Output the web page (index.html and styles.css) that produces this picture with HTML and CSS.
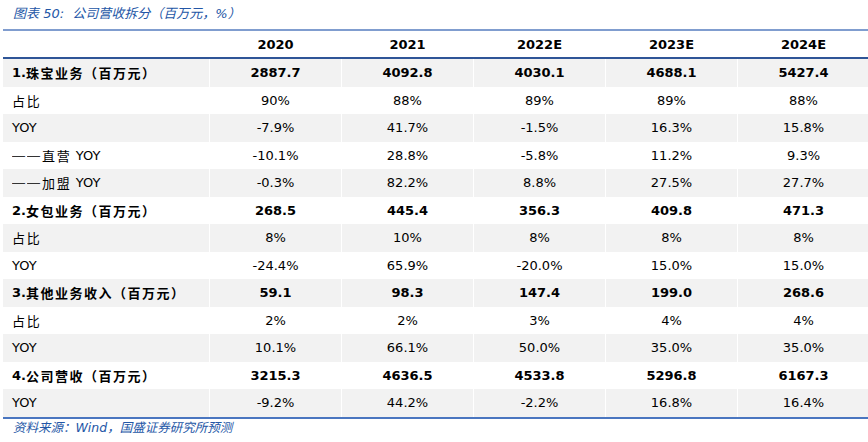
FILE: index.html
```html
<!DOCTYPE html>
<html lang="zh">
<head>
<meta charset="utf-8">
<link rel="stylesheet" href="styles.css">
</head>
<body>
<div class="caption">图表 50:&nbsp; 公司营收拆分（百万元，%）</div>
<div class="tbl">
  <div class="row head">
    <div class="c lab"></div><div class="c">2020</div><div class="c">2021</div><div class="c">2022E</div><div class="c">2023E</div><div class="c">2024E</div>
  </div>
  <div class="row g b"><div class="c lab">1.<span class="cjk">珠宝业务（百万元）</span></div><div class="c">2887.7</div><div class="c">4092.8</div><div class="c">4030.1</div><div class="c">4688.1</div><div class="c">5427.4</div></div>
  <div class="row"><div class="c lab"><span class="cjk">占比</span></div><div class="c">90%</div><div class="c">88%</div><div class="c">89%</div><div class="c">89%</div><div class="c">88%</div></div>
  <div class="row g"><div class="c lab">YOY</div><div class="c">-7.9%</div><div class="c">41.7%</div><div class="c">-1.5%</div><div class="c">16.3%</div><div class="c">15.8%</div></div>
  <div class="row"><div class="c lab"><span class="dash">—</span><span class="dash">—</span><span class="cjk">直营</span>&nbsp;YOY</div><div class="c">-10.1%</div><div class="c">28.8%</div><div class="c">-5.8%</div><div class="c">11.2%</div><div class="c">9.3%</div></div>
  <div class="row g"><div class="c lab"><span class="dash">—</span><span class="dash">—</span><span class="cjk">加盟</span>&nbsp;YOY</div><div class="c">-0.3%</div><div class="c">82.2%</div><div class="c">8.8%</div><div class="c">27.5%</div><div class="c">27.7%</div></div>
  <div class="row b"><div class="c lab">2.<span class="cjk">女包业务（百万元）</span></div><div class="c">268.5</div><div class="c">445.4</div><div class="c">356.3</div><div class="c">409.8</div><div class="c">471.3</div></div>
  <div class="row g"><div class="c lab"><span class="cjk">占比</span></div><div class="c">8%</div><div class="c">10%</div><div class="c">8%</div><div class="c">8%</div><div class="c">8%</div></div>
  <div class="row"><div class="c lab">YOY</div><div class="c">-24.4%</div><div class="c">65.9%</div><div class="c">-20.0%</div><div class="c">15.0%</div><div class="c">15.0%</div></div>
  <div class="row g b"><div class="c lab">3.<span class="cjk">其他业务收入（百万元）</span></div><div class="c">59.1</div><div class="c">98.3</div><div class="c">147.4</div><div class="c">199.0</div><div class="c">268.6</div></div>
  <div class="row"><div class="c lab"><span class="cjk">占比</span></div><div class="c">2%</div><div class="c">2%</div><div class="c">3%</div><div class="c">4%</div><div class="c">4%</div></div>
  <div class="row g"><div class="c lab">YOY</div><div class="c">10.1%</div><div class="c">66.1%</div><div class="c">50.0%</div><div class="c">35.0%</div><div class="c">35.0%</div></div>
  <div class="row b"><div class="c lab">4.<span class="cjk">公司营收（百万元）</span></div><div class="c">3215.3</div><div class="c">4636.5</div><div class="c">4533.8</div><div class="c">5296.8</div><div class="c">6167.3</div></div>
  <div class="row g"><div class="c lab">YOY</div><div class="c">-9.2%</div><div class="c">44.2%</div><div class="c">-2.2%</div><div class="c">16.8%</div><div class="c">16.4%</div></div>
</div>
<div class="source">资料来源：Wind，国盛证券研究所预测</div>
</body>
</html>
```
FILE: styles.css
```css
html, body {
  margin: 0;
  padding: 0;
  background: #ffffff;
}
body {
  font-family: "DejaVu Sans", "Noto Sans CJK SC", sans-serif;
  font-size: 13px;
  color: #000000;
  width: 868px;
  overflow: hidden;
}
.caption {
  height: 29px;
  box-sizing: border-box;
  padding: 6px 0 0 13px;
  font-style: italic;
  font-size: 13px;
  line-height: 16px;
  color: #2356a6;
}
.tbl {
  margin-left: 3px;
  width: 866px;
  border-top: 2px solid #809dcf;
  border-bottom: 2px solid #4a76c0;
}
.row {
  display: grid;
  grid-template-columns: 206px repeat(5, 132px);
  height: 27.5px;
  align-items: stretch;
}
.row.head {
  height: 26px;
  border-bottom: 2px solid #2f5597;
  font-weight: bold;
}
.row.g {
  background: #f2f2f2;
}
.row.b {
  font-weight: bold;
}
.c {
  display: flex;
  align-items: center;
  justify-content: center;
  border-left: 1px solid #ffffff;
  white-space: nowrap;
}
.c.lab {
  justify-content: flex-start;
  padding-left: 9px;
  border-left: none;
}
.cjk {
  font-family: "Noto Sans CJK SC", sans-serif;
  letter-spacing: 1.8px;
}
.row.b .cjk {
  font-weight: 600;
  letter-spacing: 1.5px;
}
.dash {
  display: inline-block;
  width: 14px;
  margin-right: 1px;
  font-family: "Liberation Sans", sans-serif;
  font-weight: normal;
  color: #333;
  font-size: 13px;
  overflow: hidden;
  text-align: left;
}
.source {
  padding: 1px 0 0 13px;
  font-style: italic;
  font-size: 12.5px;
  line-height: 15px;
  color: #2356a6;
}
```
